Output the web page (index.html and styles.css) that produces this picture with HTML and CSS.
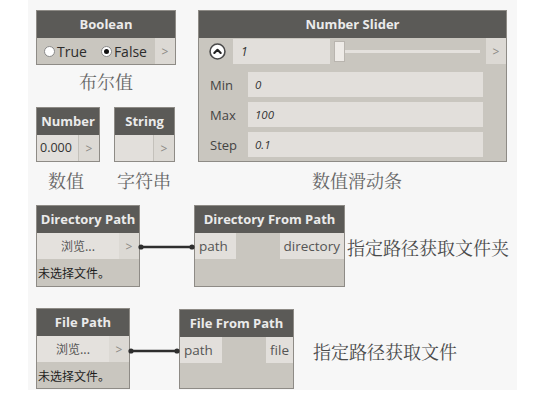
FILE: index.html
```html
<!DOCTYPE html>
<html lang="zh">
<head>
<meta charset="utf-8">
<link rel="stylesheet" href="styles.css">
</head>
<body>
<div class="canvas">
  <div class="node boolean">
    <div class="hdr">Boolean</div>
    <div class="body row">
      <div class="radios">
        <span class="radio"><span class="dot"></span>True</span>
        <span class="radio on"><span class="dot"></span>False</span>
      </div>
      <div class="port out">&gt;</div>
    </div>
  </div>
  <div class="caption cap-bool">布尔值</div>

  <div class="node number">
    <div class="hdr">Number</div>
    <div class="body row">
      <div class="field">0.000</div>
      <div class="port out">&gt;</div>
    </div>
  </div>
  <div class="node string">
    <div class="hdr">String</div>
    <div class="body row">
      <div class="field"></div>
      <div class="port out">&gt;</div>
    </div>
  </div>
  <div class="caption cap-num">数值</div>
  <div class="caption cap-str">字符串</div>

  <div class="node slider">
    <div class="hdr">Number Slider</div>
    <div class="slider-body">
      <div class="s-top">
        <span class="collapse">
          <svg width="17" height="17" viewBox="0 0 16 16"><circle cx="8" cy="8" r="7" fill="#fff" stroke="#4a4a4a" stroke-width="1.5"/><path d="M5 9.4 L8 6.4 L11 9.4" fill="none" stroke="#222" stroke-width="2" stroke-linecap="round" stroke-linejoin="round"/></svg>
        </span>
        <span class="s-val">1</span>
        <span class="track"><span class="thumb"></span><span class="line"></span></span>
        <span class="port s-port">&gt;</span>
      </div>
      <div class="s-row"><span class="s-lbl">Min</span><span class="s-in">0</span></div>
      <div class="s-row"><span class="s-lbl">Max</span><span class="s-in">100</span></div>
      <div class="s-row"><span class="s-lbl">Step</span><span class="s-in">0.1</span></div>
    </div>
  </div>
  <div class="caption cap-slider">数值滑动条</div>

  <div class="node dirpath">
    <div class="hdr">Directory Path</div>
    <div class="row">
      <div class="browse">浏览...</div>
      <div class="port out">&gt;</div>
    </div>
    <div class="none">未选择文件。</div>
  </div>
  <div class="node dirfrom">
    <div class="hdr">Directory From Path</div>
    <div class="row io">
      <div class="pin">path</div>
      <div class="pin">directory</div>
    </div>
  </div>
  <div class="side side-dir">指定路径获取文件夹</div>

  <div class="node filepath">
    <div class="hdr">File Path</div>
    <div class="row">
      <div class="browse">浏览...</div>
      <div class="port out">&gt;</div>
    </div>
    <div class="none">未选择文件。</div>
  </div>
  <div class="node filefrom">
    <div class="hdr">File From Path</div>
    <div class="row io">
      <div class="pin">path</div>
      <div class="pin">file</div>
    </div>
  </div>
  <div class="side side-file">指定路径获取文件</div>

  <svg class="wires" width="546" height="397" viewBox="0 0 546 397">
    <g stroke="#2e2e2e" stroke-width="2.6" fill="#2e2e2e">
      <line x1="140" y1="247" x2="193" y2="247"/>
      <line x1="130" y1="351" x2="178" y2="351"/>
    </g>
    <g fill="#2e2e2e">
      <circle cx="141" cy="247" r="2.6"/>
      <circle cx="192" cy="247" r="2.6"/>
      <circle cx="131" cy="351" r="2.6"/>
      <circle cx="177" cy="351" r="2.6"/>
    </g>
  </svg>
</div>
</body>
</html>
```
FILE: styles.css
```css
* { box-sizing: border-box; }
html, body { margin: 0; padding: 0; background: #ffffff; }
body { width: 546px; height: 397px; overflow: hidden; }

.canvas {
  position: relative;
  margin-left: 28px;
  width: 489px;
  height: 390px;
  background: #f7f7f7;
  font-family: "Open Sans", "Noto Sans CJK SC", sans-serif;
}

.node {
  position: absolute;
  background: #c9c6bf;
  border: 1px solid #8e8b86;
  display: flex;
  flex-direction: column;
}
.hdr {
  height: 27px;
  background: #5b5a57;
  color: #ebebeb;
  font-weight: 700;
  font-size: 13px;
  line-height: 26px;
  text-align: center;
  white-space: nowrap;
}
.row { display: flex; height: 26px; }
.body { flex: 1; }

.port {
  display: flex;
  align-items: center;
  justify-content: center;
  color: #8a8884;
  font-size: 12px;
  background: #dcd9d4;
}
.out { width: 20px; }

/* Boolean */
.boolean { left: 8px; top: 10px; width: 140px; height: 55px; }
.radios {
  flex: 1;
  display: flex;
  align-items: center;
  gap: 14px;
  padding-left: 7px;
  font-size: 14px;
  color: #2c2c2c;
}
.radio { display: flex; align-items: center; gap: 2px; }
.dot {
  width: 11px; height: 11px;
  border-radius: 50%;
  background: #fff;
  border: 1px solid #8a8a8a;
  display: inline-flex;
  align-items: center;
  justify-content: center;
}
.radio.on .dot::after {
  content: "";
  width: 5px; height: 5px;
  border-radius: 50%;
  background: #111;
}

/* Number / String */
.number { left: 8px; top: 107px; width: 64px; height: 55px; }
.string { left: 86px; top: 107px; width: 61px; height: 55px; }
.field {
  flex: 1;
  background: #e2dfdb;
  border-right: 1px solid #c4c1bb;
  font-size: 12.5px;
  color: #333;
  line-height: 26px;
  padding-left: 3px;
}

/* Captions */
.caption {
  position: absolute;
  font-family: "Noto Serif CJK SC", "Noto Sans CJK SC", serif;
  font-size: 18px;
  color: #666;
  line-height: 24px;
  text-align: center;
}
.cap-bool { left: 8px; width: 140px; top: 69px; }
.cap-num { left: 8px; width: 60px; top: 168px; }
.cap-str { left: 84px; width: 64px; top: 168px; }
.cap-slider { left: 170px; width: 318px; top: 168px; }

/* Slider */
.slider { left: 170px; top: 10px; width: 309px; height: 152px; }
.slider-body { flex: 1; display: flex; flex-direction: column; }
.s-top { display: flex; align-items: center; height: 27px; }
.collapse { width: 34px; display: flex; justify-content: center; padding-left: 2px; }
.collapse svg { display: block; }
.s-val {
  width: 97px; height: 25px;
  background: #e2dfdb;
  font-style: italic;
  font-size: 12px;
  color: #333;
  line-height: 25px;
  padding-left: 8px;
}
.track {
  flex: 1;
  display: flex;
  align-items: center;
  padding: 0 6px 0 4px;
}
.thumb {
  width: 11px; height: 21px;
  background: #eeebe7;
  border: 1px solid #b9b5af;
}
.line { flex: 1; height: 3px; background: #e4e1dd; }
.s-port { width: 20px; height: 26px; align-self: flex-start; }
.s-row { display: flex; align-items: center; height: 25px; margin-top: 5px; }
.s-row:nth-child(2) { margin-top: 7px; }
.s-lbl { width: 49px; padding-left: 11px; font-size: 13px; color: #444; }
.s-in {
  width: 235px; height: 25px;
  background: #e2dfdb;
  font-style: italic;
  font-size: 11.5px;
  color: #333;
  line-height: 25px;
  padding-left: 7px;
}

/* Path nodes */
.dirpath { left: 8px; top: 205px; width: 104px; height: 82px; }
.filepath { left: 8px; top: 308px; width: 94px; height: 81px; }
.browse {
  flex: 1;
  background: #e4e1dd;
  font-family: "Noto Sans CJK SC", sans-serif;
  font-size: 12px;
  color: #555;
  line-height: 26px;
  text-align: center;
}
.none {
  flex: 1;
  display: flex;
  align-items: center;
  font-family: "Noto Sans CJK SC", sans-serif;
  font-size: 12px;
  color: #1e1e1e;
  padding-left: 1px;
}

.dirfrom { left: 166px; top: 205px; width: 151px; height: 82px; }
.filefrom { left: 151px; top: 309px; width: 115px; height: 80px; }
.io { justify-content: space-between; }
.pin {
  background: #e2dfdb;
  font-size: 13.5px;
  color: #555;
  line-height: 26px;
  padding: 0 4px;
}
.dirfrom .pin:first-child { width: 41px; }
.filefrom .pin:first-child { width: 42px; }

.side {
  position: absolute;
  font-family: "Noto Serif CJK SC", "Noto Sans CJK SC", serif;
  font-size: 18px;
  color: #4a4a4a;
  line-height: 24px;
  white-space: nowrap;
}
.side-dir { left: 319px; top: 235px; }
.side-file { left: 285px; top: 339px; }

.wires { position: absolute; left: -28px; top: 0; pointer-events: none; }
```
